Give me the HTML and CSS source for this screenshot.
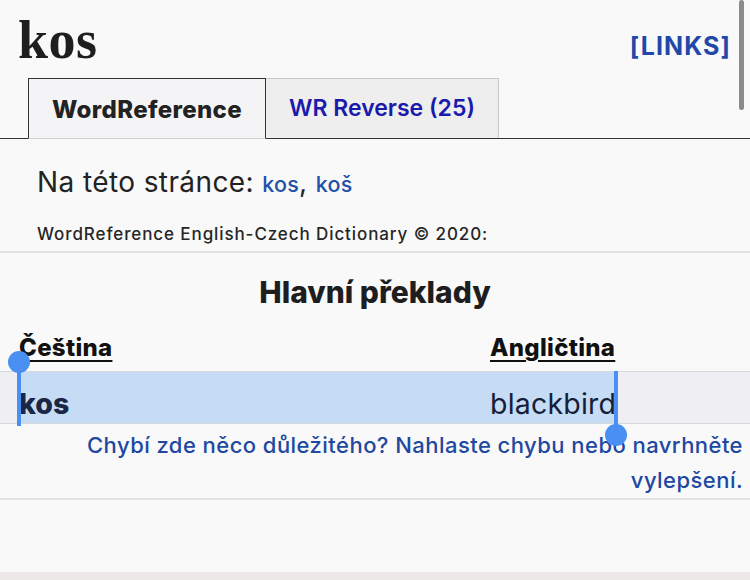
FILE: index.html
```html
<!DOCTYPE html>
<html lang="cs">
<head>
<meta charset="utf-8">
<title>kos - WordReference</title>
<link rel="stylesheet" href="styles.css">
</head>
<body>
<div class="scrollbar"></div>
<header class="top">
  <h1 class="word">kos</h1>
  <a class="links" href="#">[LINKS]</a>
</header>
<nav class="tabs">
  <div class="tab tab-active">WordReference</div>
  <div class="tab tab-other">WR Reverse (25)</div>
</nav>
<section class="intro">
  <p class="onpage">Na této stránce: <a href="#">kos</a>, <a href="#">koš</a></p>
  <p class="copy">WordReference English-Czech Dictionary © 2020:</p>
</section>
<section class="trans">
  <h2 class="trans-title">Hlavní překlady</h2>
  <div class="thead">
    <span class="th th1">Čeština</span>
    <span class="th th2">Angličtina</span>
  </div>
  <div class="trow">
    <span class="td td1">kos</span>
    <span class="td td2">blackbird</span>
    <span class="handle handle-start"></span>
    <span class="handle handle-end"></span>
  </div>
  <p class="report"><a href="#">Chybí zde něco důležitého? Nahlaste chybu nebo navrhněte vylepšení.</a></p>
</section>
<div class="spacer"></div>
<div class="bottom"></div>
</body>
</html>
```

FILE: styles.css
```css
html, body {
  margin: 0;
  padding: 0;
}
body {
  width: 750px;
  height: 580px;
  overflow: hidden;
  background: #f9f9f9;
  font-family: Inter, "Noto Sans", sans-serif;
  color: #222;
  display: flex;
  flex-direction: column;
  position: relative;
}
a {
  text-decoration: none;
}
.scrollbar {
  position: absolute;
  right: 6px;
  top: 0;
  width: 5px;
  height: 110px;
  border-radius: 3px;
  background: #8a8a8a;
}
.top {
  display: flex;
  justify-content: space-between;
  align-items: flex-start;
  padding: 0 20px 0 18px;
  height: 78px;
}
.word {
  margin: 0;
  font-family: "Liberation Serif", serif;
  font-weight: bold;
  font-size: 54px;
  line-height: 54px;
  padding-top: 13px;
  color: #1e1e1e;
  letter-spacing: 0.5px;
}
.links {
  font-weight: 700;
  font-size: 25px;
  line-height: 30px;
  margin-top: 31px;
  margin-right: -1px;
  color: #2148a8;
  letter-spacing: 1.1px;
}
.tabs {
  display: flex;
  height: 60px;
  border-bottom: 1.5px solid #333;
  padding-left: 28px;
}
.tab {
  box-sizing: border-box;
  display: flex;
  align-items: center;
  justify-content: center;
  height: 61px;
  margin-bottom: -1.5px;
}
.tab-active {
  width: 238px;
  background: #f4f4f6;
  border: 1.5px solid #333;
  border-bottom: 1.5px solid #d0d0d0;
  color: #222;
  padding-top: 2px;
  font-weight: 800;
  font-size: 24px;
  letter-spacing: 0.35px;
}
.tab-other {
  width: 233px;
  background: #eeeeee;
  border: 1px solid #c8c8c8;
  border-left: none;
  border-bottom: none;
  height: 60px;
  margin-bottom: 0;
  color: #1a1aac;
  font-weight: 600;
  font-size: 23px;
  padding-bottom: 2px;
}
.intro {
  padding: 0 0 0 37px;
  border-bottom: 2px solid #e2e2e2;
}
.onpage {
  margin: 0;
  padding-top: 26px;
  font-size: 28px;
  line-height: 34px;
  letter-spacing: 0.4px;
  color: #222;
}
.onpage a {
  color: #2250a8;
  font-size: 21.5px;
  font-weight: 500;
  letter-spacing: 0.2px;
}
.copy {
  margin: 0;
  padding: 21px 0 5px;
  font-size: 17px;
  line-height: 24px;
  font-weight: 500;
  letter-spacing: 0.9px;
  color: #262626;
}
.trans {
  display: flex;
  flex-direction: column;
  border-bottom: 2px solid #e2e2e2;
}
.trans-title {
  margin: 0;
  padding-top: 21px;
  text-align: center;
  font-size: 30px;
  line-height: 36px;
  font-weight: 800;
  color: #1e1e1e;
}
.thead {
  display: grid;
  grid-template-columns: 471px auto;
  padding-left: 19px;
  padding-top: 23px;
  height: 30px;
}
.th {
  font-weight: 800;
  font-size: 24px;
  line-height: 30px;
  letter-spacing: 0.3px;
  text-decoration: underline;
  text-underline-offset: 4px;
  text-decoration-thickness: 2px;
  color: #111;
}
.th2 {
  justify-self: start;
}
.trow {
  position: relative;
  display: grid;
  grid-template-columns: 471px 125px 1fr;
  padding-left: 19px;
  height: 51px;
  margin-top: 8px;
  background: #efeff3;
  border-top: 1.5px solid #d6d8de;
  border-bottom: 1.5px solid #d6d8de;
}
.td {
  display: flex;
  align-items: center;
  padding-top: 12px;
  background: #c6dcf5;
  color: #1a2744;
  font-size: 28.5px;
}
.td1 {
  font-weight: 800;
}
.td2 {
  font-weight: 400;
  color: #14203a;
  letter-spacing: 0.2px;
}
.handle {
  position: absolute;
  width: 3.5px;
  background: #4a90f2;
}
.handle::after {
  content: "";
  position: absolute;
  left: 50%;
  width: 22px;
  height: 22px;
  margin-left: -11px;
  border-radius: 50%;
  background: #4a90f2;
}
.handle-start {
  left: 17px;
  top: -10px;
  bottom: -3px;
}
.handle-start::after {
  top: -11px;
}
.handle-end {
  left: 614px;
  top: -1.5px;
  bottom: -12px;
}
.handle-end::after {
  bottom: -11px;
}
.report {
  margin: 0;
  padding: 3.5px 7px 0 40px;
  text-align: right;
  font-size: 22px;
  line-height: 35px;
  font-weight: 500;
  letter-spacing: 0.45px;
}
.report a {
  color: #2148a0;
}
.spacer {
  flex: 1;
}
.bottom {
  height: 8px;
  background: #ece8e8;
}
```
